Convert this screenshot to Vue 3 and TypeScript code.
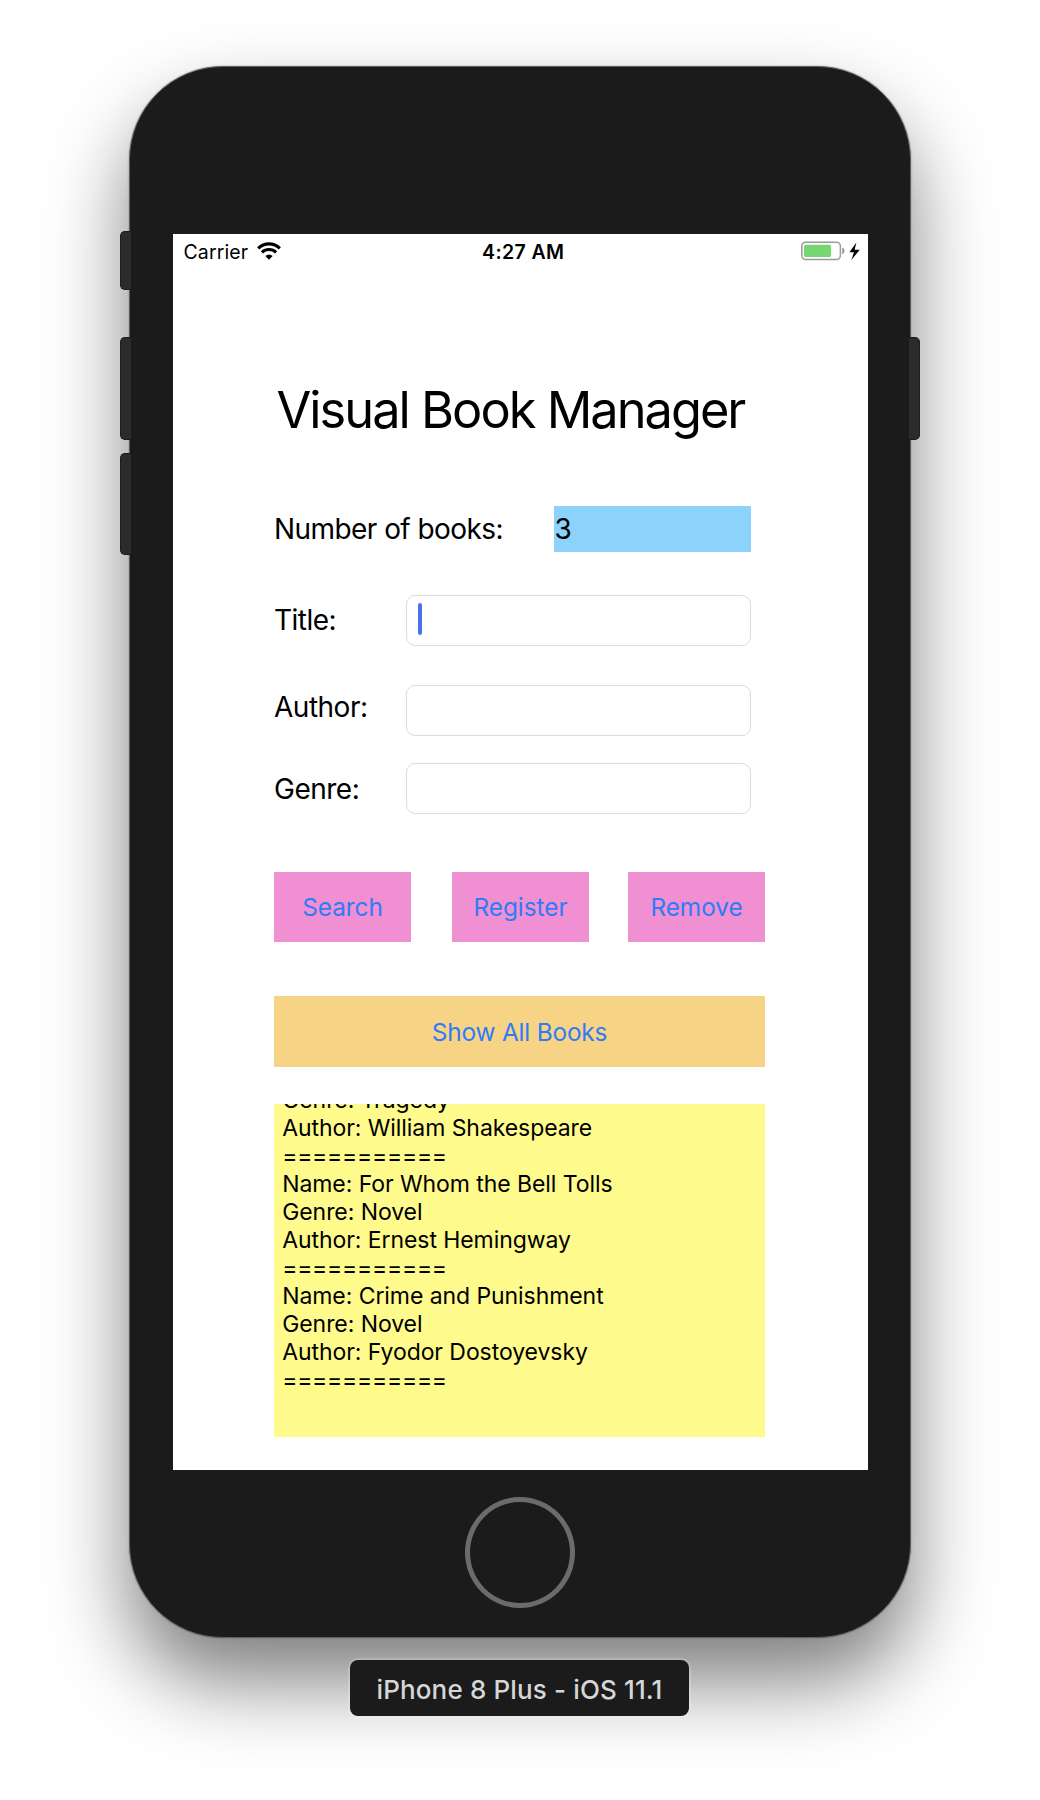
<script setup lang="ts">
interface Field {
  id: string
  label: string
  focused: boolean
}

interface Book {
  name: string
  genre: string
  author: string
}

const fields: Field[] = [
  { id: 'title', label: 'Title:', focused: true },
  { id: 'author', label: 'Author:', focused: false },
  { id: 'genre', label: 'Genre:', focused: false },
]

const actions: string[] = ['Search', 'Register', 'Remove']

const separator = '==========='

const books: Book[] = [
  { name: 'For Whom the Bell Tolls', genre: 'Novel', author: 'Ernest Hemingway' },
  { name: 'Crime and Punishment', genre: 'Novel', author: 'Fyodor Dostoyevsky' },
]

const lines: string[] = [
  'Genre: Tragedy',
  'Author: William Shakespeare',
  separator,
  ...books.flatMap((b) => [`Name: ${b.name}`, `Genre: ${b.genre}`, `Author: ${b.author}`, separator]),
]
</script>

<template>
  <div class="stage">
    <div class="phone">
      <span class="key mute"></span>
      <span class="key volume-up"></span>
      <span class="key volume-down"></span>
      <span class="key power"></span>

      <div class="screen">
        <header class="status">
          <div class="side">
            <span class="carrier">Carrier</span>
            <svg class="wifi" width="24" height="18" viewBox="0 0 24 18">
              <path d="M1.2 6.3A15.6 15.6 0 0 1 22.8 6.3" fill="none" stroke="#000" stroke-width="3.2" />
              <path d="M4.9 10.3A10.2 10.2 0 0 1 19.1 10.3" fill="none" stroke="#000" stroke-width="3" />
              <path d="M12 17.8L8.3 14Q12 10.8 15.7 14Z" fill="#000" />
            </svg>
          </div>
          <span class="clock">4:27 AM</span>
          <div class="side right">
            <svg class="battery" width="60" height="20" viewBox="0 0 60 20">
              <rect x="0.8" y="1.2" width="38.6" height="17.4" rx="4" fill="#fff" stroke="#9b9b9b" stroke-width="1.5" />
              <rect x="3" y="3.7" width="27" height="12.4" rx="1.5" fill="#76d672" />
              <path d="M41.2 6.6Q43.6 7.5 43.6 9.9Q43.6 12.3 41.2 13.2Z" fill="#9b9b9b" />
              <path d="M55.4 1.4L48.4 11.3H53L50.4 18.9L58.8 8.7H53.6Z" fill="#000" />
            </svg>
          </div>
        </header>

        <h1 class="heading">Visual Book Manager</h1>

        <main class="content">
          <div class="row">
            <span class="label wide">Number of books:</span>
            <span class="count">3</span>
          </div>

          <div v-for="f in fields" :key="f.id" class="row" :class="`row-${f.id}`">
            <span class="label">{{ f.label }}</span>
            <div class="input"><i v-if="f.focused" class="caret"></i></div>
          </div>

          <div class="actions">
            <button v-for="a in actions" :key="a" type="button">{{ a }}</button>
          </div>

          <button type="button" class="show-all">Show All Books</button>

          <div class="output">
            <p v-for="(line, i) in lines" :key="i" :class="{ rule: line === separator }">{{ line }}</p>
          </div>
        </main>
      </div>

      <div class="home"></div>
    </div>

    <div class="caption">iPhone 8 Plus - iOS 11.1</div>
  </div>
</template>

<style>
body {
  margin: 0;
  background: #fff;
}
</style>

<style scoped>
.stage {
  box-sizing: border-box;
  width: 1040px;
  height: 1800px;
  padding-top: 66px;
  overflow: hidden;
  background: #fff;
  color: #000;
  font-family: Inter, 'Liberation Sans', sans-serif;
  display: flex;
  flex-direction: column;
}

.phone {
  position: relative;
  box-sizing: border-box;
  flex: none;
  width: 782px;
  height: 1572px;
  margin-left: 129px;
  padding-top: 167px;
  border-radius: 94px;
  background: #1b1b1b;
  border: 1px solid #606060;
  box-shadow: 0 44px 80px rgba(0, 0, 0, 0.5), 0 0 2px rgba(0, 0, 0, 0.35);
}

.key {
  position: absolute;
  box-sizing: border-box;
  width: 11px;
  left: -10px;
  background: #2b2b2b;
  border: 1px solid #1c1c1c;
  border-right: 0;
  border-radius: 5px 0 0 5px;
}

.mute {
  top: 164px;
  height: 59px;
}

.volume-up {
  top: 270px;
  height: 103px;
}

.volume-down {
  top: 386px;
  height: 102px;
}

.power {
  left: auto;
  right: -10px;
  top: 270px;
  height: 103px;
  border: 1px solid #1c1c1c;
  border-left: 0;
  border-radius: 0 5px 5px 0;
}

.screen {
  width: 695px;
  height: 1236px;
  margin-left: 43px;
  background: #fff;
  overflow: hidden;
}

.status {
  height: 35px;
  display: flex;
  align-items: center;
  font-size: 19.5px;
}

.side {
  flex: 1;
  display: flex;
  align-items: center;
  padding-left: 10.5px;
}

.side.right {
  justify-content: flex-end;
  padding: 0 7px 1px 0;
}

.carrier {
  letter-spacing: 0.1px;
}

.wifi {
  margin: 0 0 2px 8.5px;
}

.clock {
  position: relative;
  left: 1px;
  font-weight: 600;
  letter-spacing: 0.4px;
}

.heading {
  margin: 110px 0 0;
  height: 61px;
  line-height: 61px;
  padding-left: 103.5px;
  font-size: 50.5px;
  font-weight: 400;
  letter-spacing: -1.98px;
  white-space: nowrap;
}

.content {
  width: 491px;
  margin: 66px 0 0 101px;
}

.row {
  width: 477px;
  display: flex;
  align-items: center;
  justify-content: space-between;
}

.label {
  font-size: 28px;
  line-height: 34px;
  letter-spacing: -0.5px;
  white-space: nowrap;
}

.label.wide {
  letter-spacing: -0.56px;
}

.count {
  width: 197px;
  height: 46px;
  line-height: 46px;
  box-sizing: border-box;
  padding-left: 0.5px;
  background: #8cd3fb;
  font-size: 28px;
}

.input {
  box-sizing: border-box;
  width: 345px;
  height: 51px;
  border: 1px solid #dcdcdc;
  border-radius: 9px;
  background: #fff;
  padding: 7px 0 0 11px;
}

.caret {
  display: block;
  width: 4px;
  height: 32px;
  border-radius: 2px;
  background: #4a73ea;
}

.row-title {
  margin-top: 43px;
}

.row-title .label {
  margin-top: -2px;
}

.row-author {
  margin-top: 39px;
}

.row-author .label {
  margin-top: -7px;
}

.row-genre {
  margin-top: 27px;
}

.row-genre .label {
  margin-top: 1px;
}

.actions {
  margin-top: 58px;
  display: flex;
}

button {
  border: 0;
  padding: 0;
  width: 137px;
  height: 70px;
  background: #f08fd2;
  color: #2f7cf6;
  font-family: inherit;
  font-size: 24.4px;
  letter-spacing: -0.05px;
  white-space: nowrap;
}

.actions button:nth-child(2) {
  margin: 0 39px 0 41px;
}

.show-all {
  display: block;
  width: 491px;
  height: 71px;
  margin-top: 54px;
  background: #f7d385;
  letter-spacing: -0.18px;
}

.output {
  box-sizing: border-box;
  height: 333px;
  margin-top: 37px;
  padding-left: 8.2px;
  background: #fffa8c;
  overflow: hidden;
}

.output p {
  margin: 0;
  height: 28.06px;
  line-height: 28.06px;
  font-size: 23px;
  letter-spacing: -0.07px;
  white-space: pre;
}

.output p:first-child {
  margin-top: -18.4px;
}

.output .rule {
  letter-spacing: -0.25px;
}

.home {
  box-sizing: border-box;
  width: 110px;
  height: 111px;
  margin: 27px 0 0 335px;
  border: 5px solid #6b6b6b;
  border-radius: 50%;
}

.caption {
  position: relative;
  flex: none;
  width: 339px;
  height: 56px;
  margin: 22px 0 0 350px;
  border-radius: 8px;
  background: #1b1b1b;
  box-shadow: 0 0 0 2px rgba(255, 255, 255, 0.2);
  color: #d6d6d6;
  font-size: 26px;
  font-weight: 500;
  letter-spacing: 0.14px;
  line-height: 59px;
  text-align: center;
  white-space: nowrap;
}
</style>
